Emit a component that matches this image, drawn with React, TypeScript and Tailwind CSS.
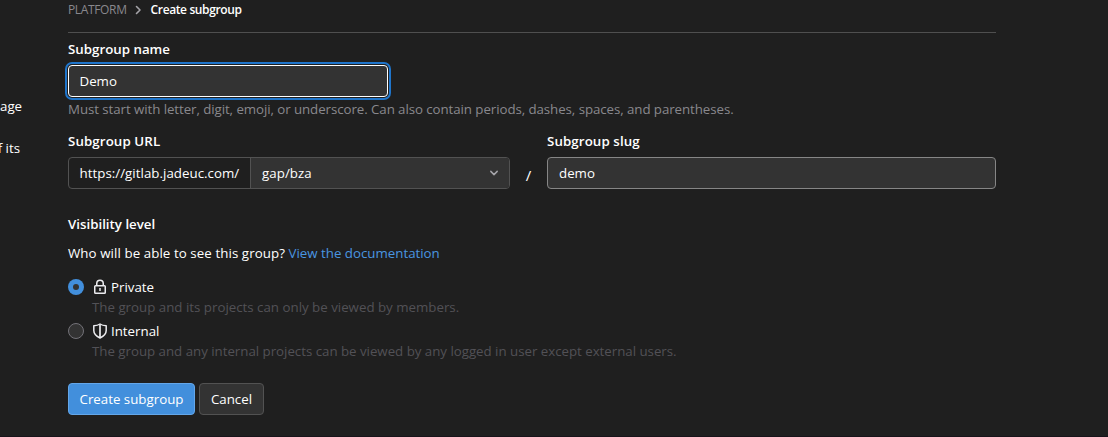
import { useState } from "react";

function ChevronRight() {
  return (
    <svg className="ml-[5px] mr-[7px] h-3 w-3 shrink-0" viewBox="0 0 12 12" fill="none" stroke="#a4a3a8" strokeWidth="1.6" strokeLinecap="round" strokeLinejoin="round">
      <path d="M4.5 2.5 8 6 4.5 9.5" />
    </svg>
  );
}

function ChevronDown() {
  return (
    <svg className="h-3 w-3 shrink-0" viewBox="0 0 12 12" fill="none" stroke="#a4a3a8" strokeWidth="1.5" strokeLinecap="round" strokeLinejoin="round">
      <path d="M2.8 4.4 6 7.6 9.2 4.4" />
    </svg>
  );
}

function LockIcon() {
  return (
    <svg className="h-4 w-4 shrink-0" viewBox="0 0 16 16" fill="none" stroke="#ececef" strokeWidth="1.5">
      <rect x="2.75" y="6.75" width="10.5" height="7.5" rx="0.8" />
      <path d="M4.75 6.750V4.500a3.250 3.250 0 0 1 6.500 0v2.250" />
      <path d="M8 9v3" />
    </svg>
  );
}

function ShieldIcon() {
  return (
    <svg className="h-4 w-4 shrink-0" viewBox="0 0 16 16" fill="none" stroke="#ececef" strokeWidth="1.5" strokeLinejoin="round">
      <path d="M8 1C6.200 2.200 4 2.700 1.800 2.800v4.700C1.800 11 4.300 13.200 8 15c3.700-1.800 6.200-4 6.200-7.500V2.800C12 2.700 9.800 2.200 8 1Z" />
      <path d="M8 1.200v13.600" strokeWidth="1.700" />
    </svg>
  );
}

function Option({ label, note, noteClass, checked, onSelect, children }: {
  label: string;
  note: string;
  noteClass: string;
  checked: boolean;
  onSelect: () => void;
  children: React.ReactNode;
}) {
  return (
    <div className="h-11">
      <button type="button" role="radio" aria-checked={checked} onClick={onSelect} className="flex h-5 items-center">
        <span className={checked ? "flex h-4 w-4 items-center justify-center rounded-full bg-[#428fdc]" : "h-4 w-4 rounded-full border border-[#737278] bg-[#333333]"}>
          {checked && <span className="h-1.5 w-1.5 rounded-full bg-[#333333]" />}
        </span>
        <span className="ml-2 flex">{children}</span>
        <span className="ml-[3px] text-white">{label}</span>
      </button>
      <p className={`ml-6 h-5 ${noteClass}`}>{note}</p>
    </div>
  );
}

export default function App() {
  const [level, setLevel] = useState("private");
  return (
    <div className="flex h-[437px] w-[1108px] overflow-hidden whitespace-nowrap border-b border-[#18131a] bg-[#1f1f1f] font-['Open_Sans','Noto_Sans',sans-serif] text-[13.3px] leading-5 text-white">
      <aside className="flex w-[68px] shrink-0 flex-col pt-24">
        <p className="h-5">age</p>
        <p className="mt-[22px] flex h-5 w-5 justify-end">f its</p>
      </aside>
      <main className="w-[928px] shrink-0">
        <nav className="flex h-[33px] items-start border-b border-[#4f4f4f] text-[12px]">
          <div className="flex h-5 items-center">
            <span className="tracking-[-0.35px] text-[#89888d]">PLATFORM</span>
            <ChevronRight />
            <span className="font-semibold tracking-[-0.38px]">Create subgroup</span>
          </div>
        </nav>
        <div className="pt-1.5">
          <label className="block h-[26px] font-semibold">Subgroup name</label>
          <div className="flex h-8 w-80 items-center rounded border border-white bg-[#333333] px-[10.5px] shadow-[0_0_0_1px_#1f1f1f,0_0_0_3px_#1f75cb]">Demo</div>
          <p className="mt-0.5 h-5 tracking-[-0.07px] text-[#89888d]">Must start with letter, digit, emoji, or underscore. Can also contain periods, dashes, spaces, and parentheses.</p>
        </div>
        <div className="mt-3 flex">
          <div className="w-[442px]">
            <label className="block h-[26px] font-semibold tracking-[0.1px]">Subgroup URL</label>
            <div className="flex h-8 overflow-hidden rounded border border-[#525252]">
              <span className="flex w-[182px] items-center border-r border-[#525252] pl-[10.5px] tracking-[0.03px]">https://gitlab.jadeuc.com/</span>
              <span className="flex flex-1 items-center justify-between bg-[#333333] pl-[11px] pr-[9px] tracking-[0.05px]">
                gap/bza
                <ChevronDown />
              </span>
            </div>
          </div>
          <span className="flex w-[37px] items-end justify-center pb-1 text-[15px]">/</span>
          <div className="w-[449px]">
            <label className="block h-[26px] font-semibold tracking-[0.1px]">Subgroup slug</label>
            <div className="flex h-8 items-center rounded border border-[#868686] bg-[#333333] px-[11px]">demo</div>
          </div>
        </div>
        <section className="mt-[25px]">
          <h2 className="h-[29px] font-semibold">Visibility level</h2>
          <p className="h-[34px]">
            <span className="tracking-[0.08px]">Who will be able to see this group?</span> <a className="text-[#4a96e0]">View the documentation</a>
          </p>
          <div role="radiogroup">
            <Option label="Private" note="The group and its projects can only be viewed by members." noteClass="text-[#525156]" checked={level === "private"} onSelect={() => setLevel("private")}>
              <LockIcon />
            </Option>
            <Option label="Internal" note="The group and any internal projects can be viewed by any logged in user except external users." noteClass="text-[#525156] tracking-[-0.02px]" checked={level === "internal"} onSelect={() => setLevel("internal")}>
              <ShieldIcon />
            </Option>
          </div>
        </section>
        <div className="mt-[18px] flex gap-1">
          <button className="flex h-8 w-[127px] items-center justify-center rounded border border-[#63a6e9] bg-[#428fdc]">Create subgroup</button>
          <button className="flex h-8 w-[65px] items-center justify-center rounded border border-[#525252] bg-[#333333]">Cancel</button>
        </div>
      </main>
    </div>
  );
}
